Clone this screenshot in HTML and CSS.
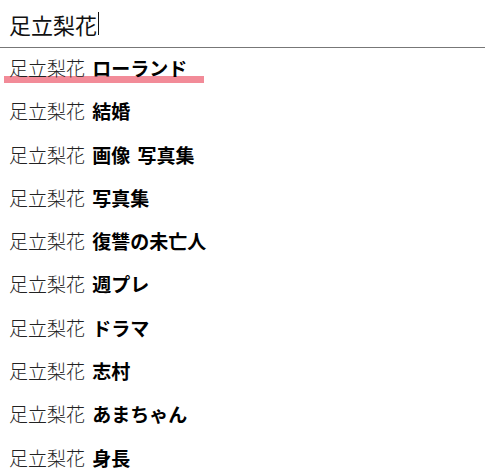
FILE: index.html
```html
<!DOCTYPE html>
<html lang="ja">

<head>
    <meta charset="UTF-8">
    <meta name="viewport" content="width=device-width, initial-scale=1.0">
    <title>検索</title>
    <link rel="stylesheet" href="styles.css">
</head>

<body>
    <div class="search-box">
        <div class="query">足立梨花<span class="caret"></span></div>
        <ul class="suggest">
            <li class="active"><span class="base">足立梨花</span> <b>ローランド</b><span class="mark"></span></li>
            <li><span class="base">足立梨花</span> <b>結婚</b></li>
            <li><span class="base">足立梨花</span> <b>画像 写真集</b></li>
            <li><span class="base">足立梨花</span> <b>写真集</b></li>
            <li><span class="base">足立梨花</span> <b>復讐の未亡人</b></li>
            <li><span class="base">足立梨花</span> <b>週プレ</b></li>
            <li><span class="base">足立梨花</span> <b>ドラマ</b></li>
            <li><span class="base">足立梨花</span> <b>志村</b></li>
            <li><span class="base">足立梨花</span> <b>あまちゃん</b></li>
            <li><span class="base">足立梨花</span> <b>身長</b></li>
        </ul>
    </div>
</body>

</html>
```

FILE: styles.css
```css
body {
    margin: 0;
    background: #fff;
    font-family: "Noto Sans CJK JP", "Noto Sans", sans-serif;
    color: #111;
}

.search-box {
    width: 100%;
}

.query {
    height: 47px;
    padding-left: 9px;
    font-size: 22px;
    border-bottom: 1px solid #777;
    display: flex;
    align-items: center;
}

.caret {
    display: inline-block;
    width: 1px;
    height: 23px;
    margin-left: 1px;
    background: #111;
}

.suggest {
    list-style: none;
    margin: 0;
    padding: 0;
}

.suggest li {
    position: relative;
    z-index: 0;
    height: 43.3px;
    line-height: 39px;
    padding-left: 9px;
    font-size: 19px;
    white-space: nowrap;
}

.base {
    font-weight: 300;
    color: #222;
}

.suggest b {
    margin-left: 3px;
    font-weight: 700;
    color: #000;
    word-spacing: 3px;
}

/* 下線のハイライト（文字の下に敷く） */
.mark {
    position: absolute;
    z-index: -1;
    left: 4px;
    top: 28px;
    width: 200px;
    height: 7px;
    background: #f28b98;
}
```
